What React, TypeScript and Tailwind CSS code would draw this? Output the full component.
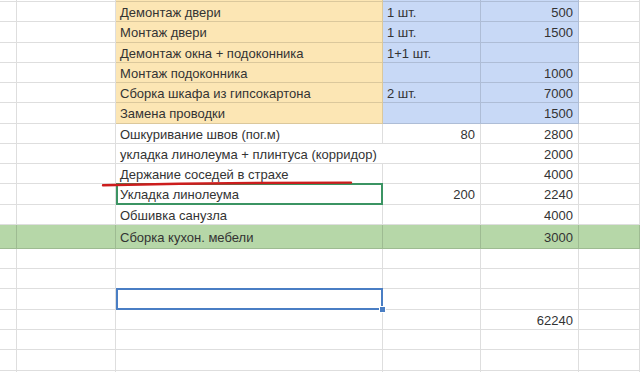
import React from "react";

type Cell = { t?: string; r?: boolean; bg?: string };
type Row = { h: string; cells: Cell[]; noCD?: boolean; green?: boolean; sel?: boolean; fill?: string };

const W = ["w-[17px]", "w-[99px]", "w-[267px]", "w-[98px]", "w-[98px]", "flex-1"];

const Y = "bg-[#fce6b4]";
const B = "bg-[#c8d9f6]";
const G = "bg-[#b6d7a8]";

const top: Cell[] = [{}, {}, { bg: Y }, { bg: B }, { bg: B }, {}];

const yb = (c: string, d: string, e: string): Cell[] => [
  {},
  {},
  { t: c, bg: Y },
  { t: d, bg: B },
  { t: e, r: true, bg: B },
  {},
];
const wh = (c: string, d: string, e: string): Cell[] => [
  {},
  {},
  { t: c },
  { t: d, r: true },
  { t: e, r: true },
  {},
];

const H = "h-[20.25px]";
const H2 = "h-[20.35px]";

const rows: Row[] = [
  { h: "h-[2px]", cells: top },
  { h: H, cells: yb("Демонтаж двери", "1 шт.", "500") },
  { h: H, cells: yb("Монтаж двери", "1 шт.", "1500") },
  { h: H, cells: yb("Демонтаж окна + подоконника", "1+1 шт.", "") },
  { h: H, cells: yb("Монтаж подоконника", "", "1000") },
  { h: H, cells: yb("Сборка шкафа из гипсокартона", "2 шт.", "7000") },
  { h: H, cells: yb("Замена проводки", "", "1500") },
  { h: H, cells: wh("Ошкуривание швов (пог.м)", "80", "2800") },
  { h: H, cells: wh("укладка линолеума + плинтуса (корридор)", "", "2000"), noCD: true },
  { h: H, cells: wh("Держание соседей в страхе", "", "4000") },
  { h: H, cells: wh("Укладка линолеума", "200", "2240"), green: true },
  { h: H, cells: wh("Обшивка санузла", "", "4000") },
  { h: "h-[24px]", cells: wh("Сборка кухон. мебели", "", "3000"), fill: G },
  { h: H2, cells: wh("", "", "") },
  { h: H2, cells: wh("", "", "") },
  { h: H2, cells: wh("", "", ""), sel: true },
  { h: H2, cells: wh("", "", "62240") },
  { h: H2, cells: wh("", "", "") },
  { h: H2, cells: wh("", "", "") },
  { h: H2, cells: wh("", "", "") },
];

export default function App() {
  return (
    <div className="relative w-[640px] h-[372px] overflow-hidden bg-white text-[13px] text-[#333333] [font-family:'Liberation_Sans',Arial,sans-serif]">
      <div className="flex flex-col">
        {rows.map((row, i) => (
          <div key={i} className={`flex shrink-0 ${row.h} ${row.fill ?? ""}`}>
            {row.cells.map((c, j) => {
              const noRight = row.noCD && j === 2;
              return (
                <div
                  key={j}
                  className={`relative shrink-0 ${W[j]} ${c.bg ?? ""} border-b border-[rgba(0,0,0,0.13)] ${
                    noRight ? "z-10" : "border-r"
                  } flex items-center ${c.r ? "justify-end pr-[5px]" : "justify-start pl-[4px]"}`}
                >
                  {c.t ? <span className="whitespace-nowrap leading-none pt-[2px]">{c.t}</span> : null}
                  {row.green && j === 2 ? (
                    <div className="absolute left-0 top-[-1px] right-[-1px] bottom-[-1px] border-2 border-[#3b9463]" />
                  ) : null}
                  {row.sel && j === 2 ? (
                    <>
                      <div className="absolute left-0 top-[-1px] right-[-1px] bottom-[-1px] border-2 border-[#4a7ec4]" />
                      <div className="absolute right-[-4px] bottom-[-4px] w-[7px] h-[7px] bg-[#4a7ec4] border border-white z-20" />
                    </>
                  ) : null}
                </div>
              );
            })}
          </div>
        ))}
      </div>
      <svg className="absolute left-0 top-0 pointer-events-none" width="640" height="372">
        <path
          d="M103 185.2 C 180 183.6, 280 182.6, 351 182.6"
          stroke="#cc1d1d"
          strokeWidth="2.4"
          fill="none"
          strokeLinecap="round"
        />
      </svg>
    </div>
  );
}
